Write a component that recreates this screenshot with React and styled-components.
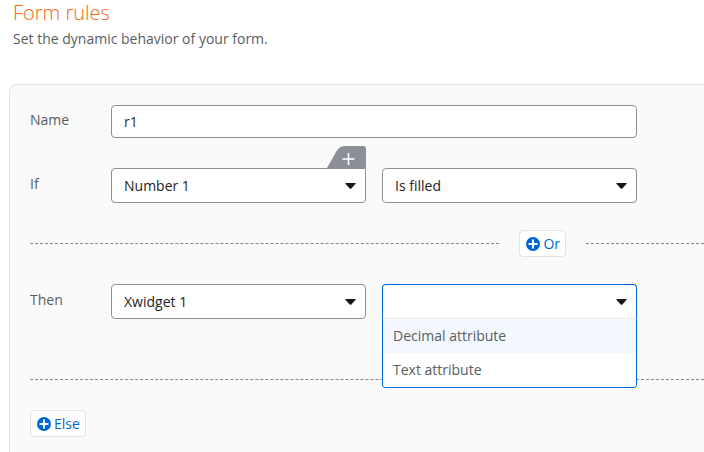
import React, { useState } from "react";
import styled, { createGlobalStyle } from "styled-components";

const GlobalStyle = createGlobalStyle`
  *, *::before, *::after { box-sizing: border-box; }
  body {
    margin: 0;
    background: #fff;
    color: #575e62;
    font: 14px/20px "Open Sans", "Noto Sans", sans-serif;
  }
  button, input, select { font: inherit; }
`;

const Page = styled.main`
  display: flex;
  flex-direction: column;
  min-height: 100vh;
  padding-left: 9px;
`;

const Header = styled.header`
  padding: 0 4px 35px;
`;

const Title = styled.h1`
  margin: 0;
  color: #f76411;
  font-size: 20px;
  font-weight: 300;
  line-height: 25px;
`;

const Subtitle = styled.p`
  margin: 4px 0 0;
`;

const Panel = styled.form`
  flex: 1;
  padding: 20px 0 14px 20px;
  border: solid #e2e3e4;
  border-width: 1px 0 0 1px;
  border-radius: 8px 0 0 0;
  background: #fafafa;
`;

const Row = styled.div`
  display: grid;
  grid-template-columns: 81px minmax(0, 1fr);
  align-items: center;
  padding-right: 67px;
`;

const FirstRow = styled(Row)`
  margin-bottom: 30px;
`;

const Label = styled.label`
  padding-bottom: 3px;
`;

const TextInput = styled.input`
  width: 100%;
  height: 33px;
  padding: 0 12px;
  border: 1px solid #8b8f97;
  border-radius: 4px;
  background: #fff;
  color: #2c2f31;
  outline: none;
`;

const Fields = styled.div`
  display: grid;
  grid-template-columns: repeat(2, minmax(0, 1fr));
  gap: 16px;
`;

const SelectBox = styled.div`
  position: relative;
`;

const Select = styled.select`
  display: block;
  appearance: none;
  width: 100%;
  height: 35px;
  padding: 0 32px 0 12px;
  border: 1px solid ${(p) => (p.$open ? "#0068d6" : "#8b8f97")};
  border-bottom-color: ${(p) => (p.$open ? "#e9ebed" : "#8b8f97")};
  border-radius: ${(p) => (p.$open ? "4px 4px 0 0" : p.$tabbed ? "4px 0 4px 4px" : "4px")};
  background: #fff;
  color: #1f2225;
  outline: none;
`;

const Caret = styled.svg`
  position: absolute;
  top: 15px;
  right: 10px;
  width: 11px;
  height: 6px;
  fill: #171717;
  pointer-events: none;
`;

const TabButton = styled.button`
  position: absolute;
  right: 0;
  bottom: 100%;
  width: 39px;
  height: 22px;
  padding: 0;
  border: 0;
  background: none;
  cursor: pointer;

  svg { display: block; }
`;

const Menu = styled.ul`
  position: absolute;
  z-index: 1;
  top: 100%;
  left: 0;
  right: 0;
  margin: 0;
  padding: 0;
  border: 1px solid #0068d6;
  border-top: 0;
  border-radius: 0 0 4px 4px;
  background: #fff;
  list-style: none;
  overflow: hidden;
`;

const MenuItem = styled.li`
  padding: 7px 10px;
  background: ${(p) => (p.$active ? "#f3f8ff" : "#fff")};
  cursor: pointer;
`;

const Divider = styled.div`
  display: flex;
  align-items: center;
  gap: 20px;
  margin: 27px 0;
`;

const Dashes = styled.hr`
  flex: ${(p) => (p.$tail ? "0 0 118px" : "1")};
  margin: 0;
  border: 0;
  border-top: 1px dashed #88888b;
`;

const AddButton = styled.button`
  display: inline-flex;
  align-items: center;
  gap: 3px;
  height: 27px;
  padding: 0 5px 0 6px;
  border: 1px solid #e2e3e4;
  border-radius: 4px;
  background: #fff;
  color: #0068d6;
  cursor: pointer;
`;

const SectionEnd = styled.div`
  margin: 60px 0 30px;
`;

function PlusCircle() {
  return (
    <svg width="14" height="14" viewBox="0 0 14 14" aria-hidden="true">
      <circle cx="7" cy="7" r="7" fill="#0068d6" />
      <path d="M7 2.5v9M2.5 7h9" stroke="#fff" strokeWidth="2" />
    </svg>
  );
}

function Dropdown({ id, label, value, tabbed, options }) {
  const [selected, setSelected] = useState(value);
  const open = Boolean(options) && !selected;
  return (
    <SelectBox>
      {tabbed && (
        <TabButton type="button" aria-label="Add condition">
          <svg width="39" height="22" viewBox="0 0 39 22" aria-hidden="true">
            <path d="M0 22L9 6Q12 0 18 0H36Q39 0 39 3V22Z" fill="#8b8f97" />
            <path d="M21.5 7v12M15.5 13h12" stroke="#fff" strokeWidth="1.6" />
          </svg>
        </TabButton>
      )}
      <Select
        id={id}
        aria-label={label}
        value={selected}
        onChange={(e) => setSelected(e.target.value)}
        $open={open}
        $tabbed={tabbed}
      >
        <option value={value}>{value}</option>
        {options?.map((name) => <option key={name}>{name}</option>)}
      </Select>
      <Caret viewBox="0 0 11 6" aria-hidden="true">
        <path d="M1 0H10Q11.2 0 10.4 1L6.3 5.5Q5.5 6.2 4.7 5.5L.6 1Q-.2 0 1 0Z" />
      </Caret>
      {open && (
        <Menu role="listbox" aria-label={label}>
          {options.map((name, i) => (
            <MenuItem
              key={name}
              role="option"
              aria-selected={i === 0}
              $active={i === 0}
              onClick={() => setSelected(name)}
            >
              {name}
            </MenuItem>
          ))}
        </Menu>
      )}
    </SelectBox>
  );
}

export default function App() {
  return (
    <Page>
      <GlobalStyle />
      <Header>
        <Title>Form rules</Title>
        <Subtitle>Set the dynamic behavior of your form.</Subtitle>
      </Header>
      <Panel>
        <FirstRow>
          <Label htmlFor="name">Name</Label>
          <TextInput id="name" type="text" defaultValue="r1" />
        </FirstRow>
        <Row>
          <Label htmlFor="if">If</Label>
          <Fields>
            <Dropdown id="if" value="Number 1" tabbed />
            <Dropdown label="Condition" value="Is filled" />
          </Fields>
        </Row>
        <Divider>
          <Dashes />
          <AddButton type="button"><PlusCircle />Or</AddButton>
          <Dashes $tail />
        </Divider>
        <Row>
          <Label htmlFor="then">Then</Label>
          <Fields>
            <Dropdown id="then" value="Xwidget 1" />
            <Dropdown
              label="Attribute"
              value=""
              options={["Decimal attribute", "Text attribute"]}
            />
          </Fields>
        </Row>
        <SectionEnd><Dashes /></SectionEnd>
        <AddButton type="button"><PlusCircle />Else</AddButton>
      </Panel>
    </Page>
  );
}
